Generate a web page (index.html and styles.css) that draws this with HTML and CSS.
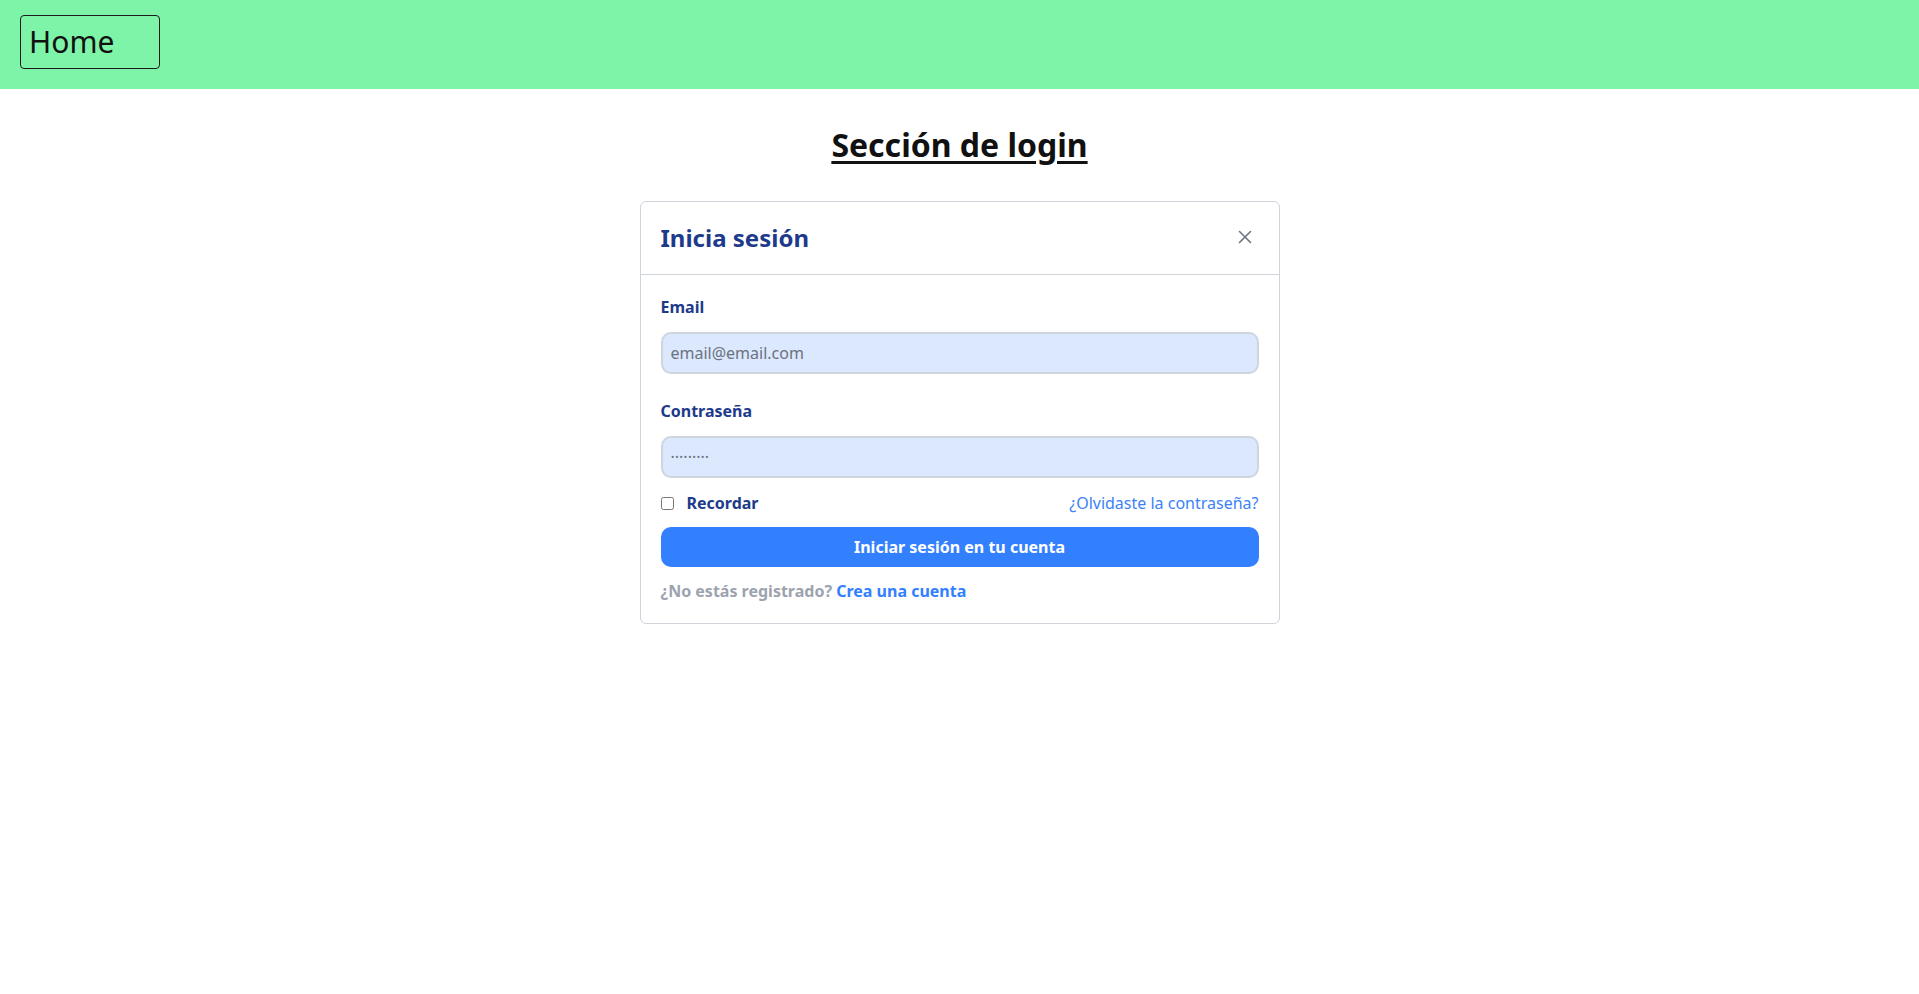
FILE: index.html
```html
<!DOCTYPE html>
<html lang="es">
<head>
<meta charset="utf-8">
<title>Login</title>
<link rel="stylesheet" href="styles.css">
</head>
<body>
<header class="topbar">
  <button class="home-btn" type="button">Home</button>
</header>
<main class="page">
  <h1 class="page-title">Sección de login</h1>
  <section class="card">
    <div class="card-head">
      <h3 class="card-title">Inicia sesión</h3>
      <button class="close-btn" type="button" aria-label="Cerrar">
        <svg width="14" height="14" viewBox="0 0 14 14" fill="none" stroke="currentColor" stroke-width="1.6" stroke-linecap="round"><path d="M1.5 1.5l11 11M12.5 1.5l-11 11"/></svg>
      </button>
    </div>
    <form class="card-body">
      <label class="field-label" for="email">Email</label>
      <input class="field-input" id="email" type="email" placeholder="email@email.com">
      <label class="field-label gap-top" for="pass">Contraseña</label>
      <input class="field-input" id="pass" type="password" placeholder="·········">
      <div class="options-row">
        <label class="remember"><input class="check" type="checkbox"><span>Recordar</span></label>
        <a class="forgot" href="#">¿Olvidaste la contraseña?</a>
      </div>
      <button class="submit-btn" type="button">Iniciar sesión en tu cuenta</button>
      <p class="register">¿No estás registrado? <a href="#" class="register-link">Crea una cuenta</a></p>
    </form>
  </section>
</main>
</body>
</html>
```
FILE: styles.css
```css
* { box-sizing: border-box; }
html, body { margin: 0; padding: 0; background: #fff; }
body { font-family: "Noto Sans", "Open Sans", sans-serif; color: #111; }

.topbar {
  background: #7ef4a8;
  height: 89px;
  padding: 15px 20px 0;
}
.home-btn {
  display: block;
  width: 140px;
  height: 54px;
  padding: 0 0 0 8px;
  text-align: left;
  font-family: "Noto Sans", sans-serif;
  font-size: 30px;
  line-height: 44px;
  color: #111;
  background: transparent;
  border: 1px solid #1a1a1a;
  border-radius: 4px;
}

.page { display: flex; flex-direction: column; align-items: center; }
.page-title {
  margin: 34px 0 34px;
  font-size: 32px;
  line-height: 44px;
  font-weight: 700;
  text-decoration: underline;
  text-underline-offset: 4px;
  color: #111;
}

.card {
  width: 640px;
  border: 1px solid #cfd3da;
  border-radius: 6px;
  background: #fff;
}
.card-head {
  display: flex;
  align-items: center;
  justify-content: space-between;
  height: 73px;
  padding: 0 20px;
  border-bottom: 1px solid #cfd3da;
}
.card-title {
  margin: 0;
  font-size: 24px;
  line-height: 32px;
  font-weight: 700;
  color: #1e3a8a;
}
.close-btn {
  width: 28px;
  height: 28px;
  padding: 0;
  display: flex;
  align-items: center;
  justify-content: center;
  border: 0;
  background: transparent;
  color: #6b7280;
  margin-top: -2px;
}

.card-body {
  display: flex;
  flex-direction: column;
  padding: 20px;
}
.field-label {
  font-size: 16px;
  line-height: 24px;
  font-weight: 700;
  color: #1e3a8a;
  margin-bottom: 13px;
}
.gap-top { margin-top: 25px; }
.field-input {
  height: 42px;
  width: 100%;
  padding: 0 8px;
  font-family: "Noto Sans", sans-serif;
  font-size: 16px;
  color: #111;
  background: #dbe8fd;
  border: 2px solid #cfd5de;
  border-radius: 10px;
  outline: none;
}
.field-input::placeholder { color: #6b7280; }

.options-row {
  display: flex;
  align-items: center;
  justify-content: space-between;
  margin-top: 13px;
  height: 24px;
}
.remember {
  display: flex;
  align-items: center;
  gap: 13px;
  font-size: 16px;
  line-height: 24px;
  font-weight: 700;
  color: #1e3a8a;
}
.check { width: 13px; height: 13px; margin: 0; }
.forgot {
  font-size: 16px;
  line-height: 24px;
  color: #3b82f6;
  text-decoration: none;
}

.submit-btn {
  margin-top: 12px;
  height: 40px;
  width: 100%;
  border: 0;
  border-radius: 10px;
  background: #3380ff;
  color: #fff;
  font-family: "Noto Sans", sans-serif;
  font-size: 16px;
  font-weight: 700;
}

.register {
  margin: 12px 0 0;
  font-size: 16px;
  line-height: 24px;
  font-weight: 700;
  color: #9ca3af;
}
.register-link { color: #3380ff; text-decoration: none; }
```
